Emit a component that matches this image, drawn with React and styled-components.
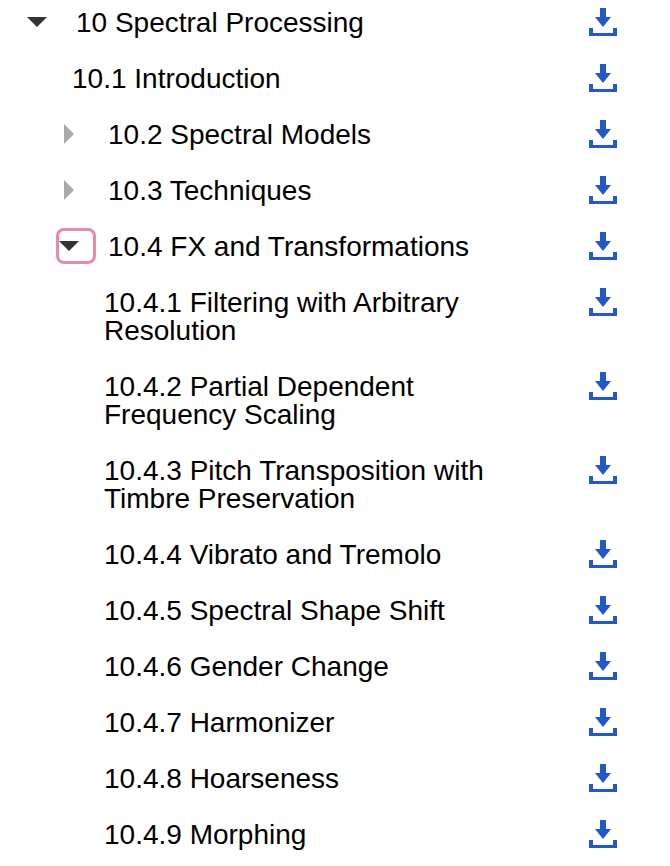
import React from 'react'
import styled, { createGlobalStyle } from 'styled-components'

const Global = createGlobalStyle`
    html, body {
        margin: 0;
        padding: 0;
        background: #fff;
        overflow: hidden;
    }
`

const Tree = styled.div`
    width: 670px;
    height: 866px;
    overflow: hidden;
    padding-top: 9px;
    box-sizing: border-box;
    font-family: "Liberation Sans", Arial, sans-serif;
    font-size: 28px;
    line-height: 28px;
    color: #000;
`

const Row = styled.div`
    display: flex;
    align-items: flex-start;
    width: 618px;
    padding-left: ${({ $indent }) => $indent}px;
    padding-bottom: 28px;
    box-sizing: border-box;
`

const Label = styled.div`
    flex: 1;
    margin-left: ${({ $gap }) => $gap || 0}px;
`

const Toggle = styled.div`
    flex: none;
    width: 40px;
    height: 36px;
    margin: -5px 0 -3px;
    box-sizing: border-box;
    display: flex;
    align-items: center;
    justify-content: flex-start;
    border-radius: 8px;
    border: 3px solid ${({ $focused }) => ($focused ? '#e68ab0' : 'transparent')};
`

const DownArrow = styled.div`
    width: 0;
    height: 0;
    border-left: 10px solid transparent;
    border-right: 10px solid transparent;
    border-top: 10px solid #333;
`

const RightArrow = styled.div`
    width: 0;
    height: 0;
    margin-left: 5px;
    border-top: 10px solid transparent;
    border-bottom: 10px solid transparent;
    border-left: 10px solid #aaa;
`

const IconSlot = styled.div`
    flex: none;
    width: 29px;
    height: 28px;
    margin-top: -1px;
    margin-bottom: 1px;
`

const DownloadIcon = () => (
    <svg width="28" height="28" viewBox="0 0 28 28" style={{ display: 'block' }}>
        <path d="M11 0h6v9h5l-8 10-8-10h5z" fill="#2259c7" />
        <path d="M0 20h4v5h20v-5h4v8H0z" fill="#2259c7" />
    </svg>
)

const items = [
    { text: '10 Spectral Processing', indent: 24, toggle: 'open', gap: 12 },
    { text: '10.1 Introduction', indent: 72 },
    { text: '10.2 Spectral Models', indent: 56, toggle: 'closed', gap: 12 },
    { text: '10.3 Techniques', indent: 56, toggle: 'closed', gap: 12 },
    { text: '10.4 FX and Transformations', indent: 56, toggle: 'focused', gap: 12 },
    { text: <>10.4.1 Filtering with Arbitrary<br />Resolution</>, indent: 104 },
    { text: <>10.4.2 Partial Dependent<br />Frequency Scaling</>, indent: 104 },
    { text: <>10.4.3 Pitch Transposition with<br />Timbre Preservation</>, indent: 104 },
    { text: '10.4.4 Vibrato and Tremolo', indent: 104 },
    { text: '10.4.5 Spectral Shape Shift', indent: 104 },
    { text: '10.4.6 Gender Change', indent: 104 },
    { text: '10.4.7 Harmonizer', indent: 104 },
    { text: '10.4.8 Hoarseness', indent: 104 },
    { text: '10.4.9 Morphing', indent: 104 },
]

const App = () => {
    return (
        <Tree>
            <Global />
            {items.map((item, index) => (
                <Row key={index} $indent={item.indent}>
                    {item.toggle && (
                        <Toggle $focused={item.toggle === 'focused'}>
                            {item.toggle === 'closed' ? <RightArrow /> : <DownArrow />}
                        </Toggle>
                    )}
                    <Label $gap={item.gap}>{item.text}</Label>
                    <IconSlot><DownloadIcon /></IconSlot>
                </Row>
            ))}
        </Tree>
    )
}

export default App
